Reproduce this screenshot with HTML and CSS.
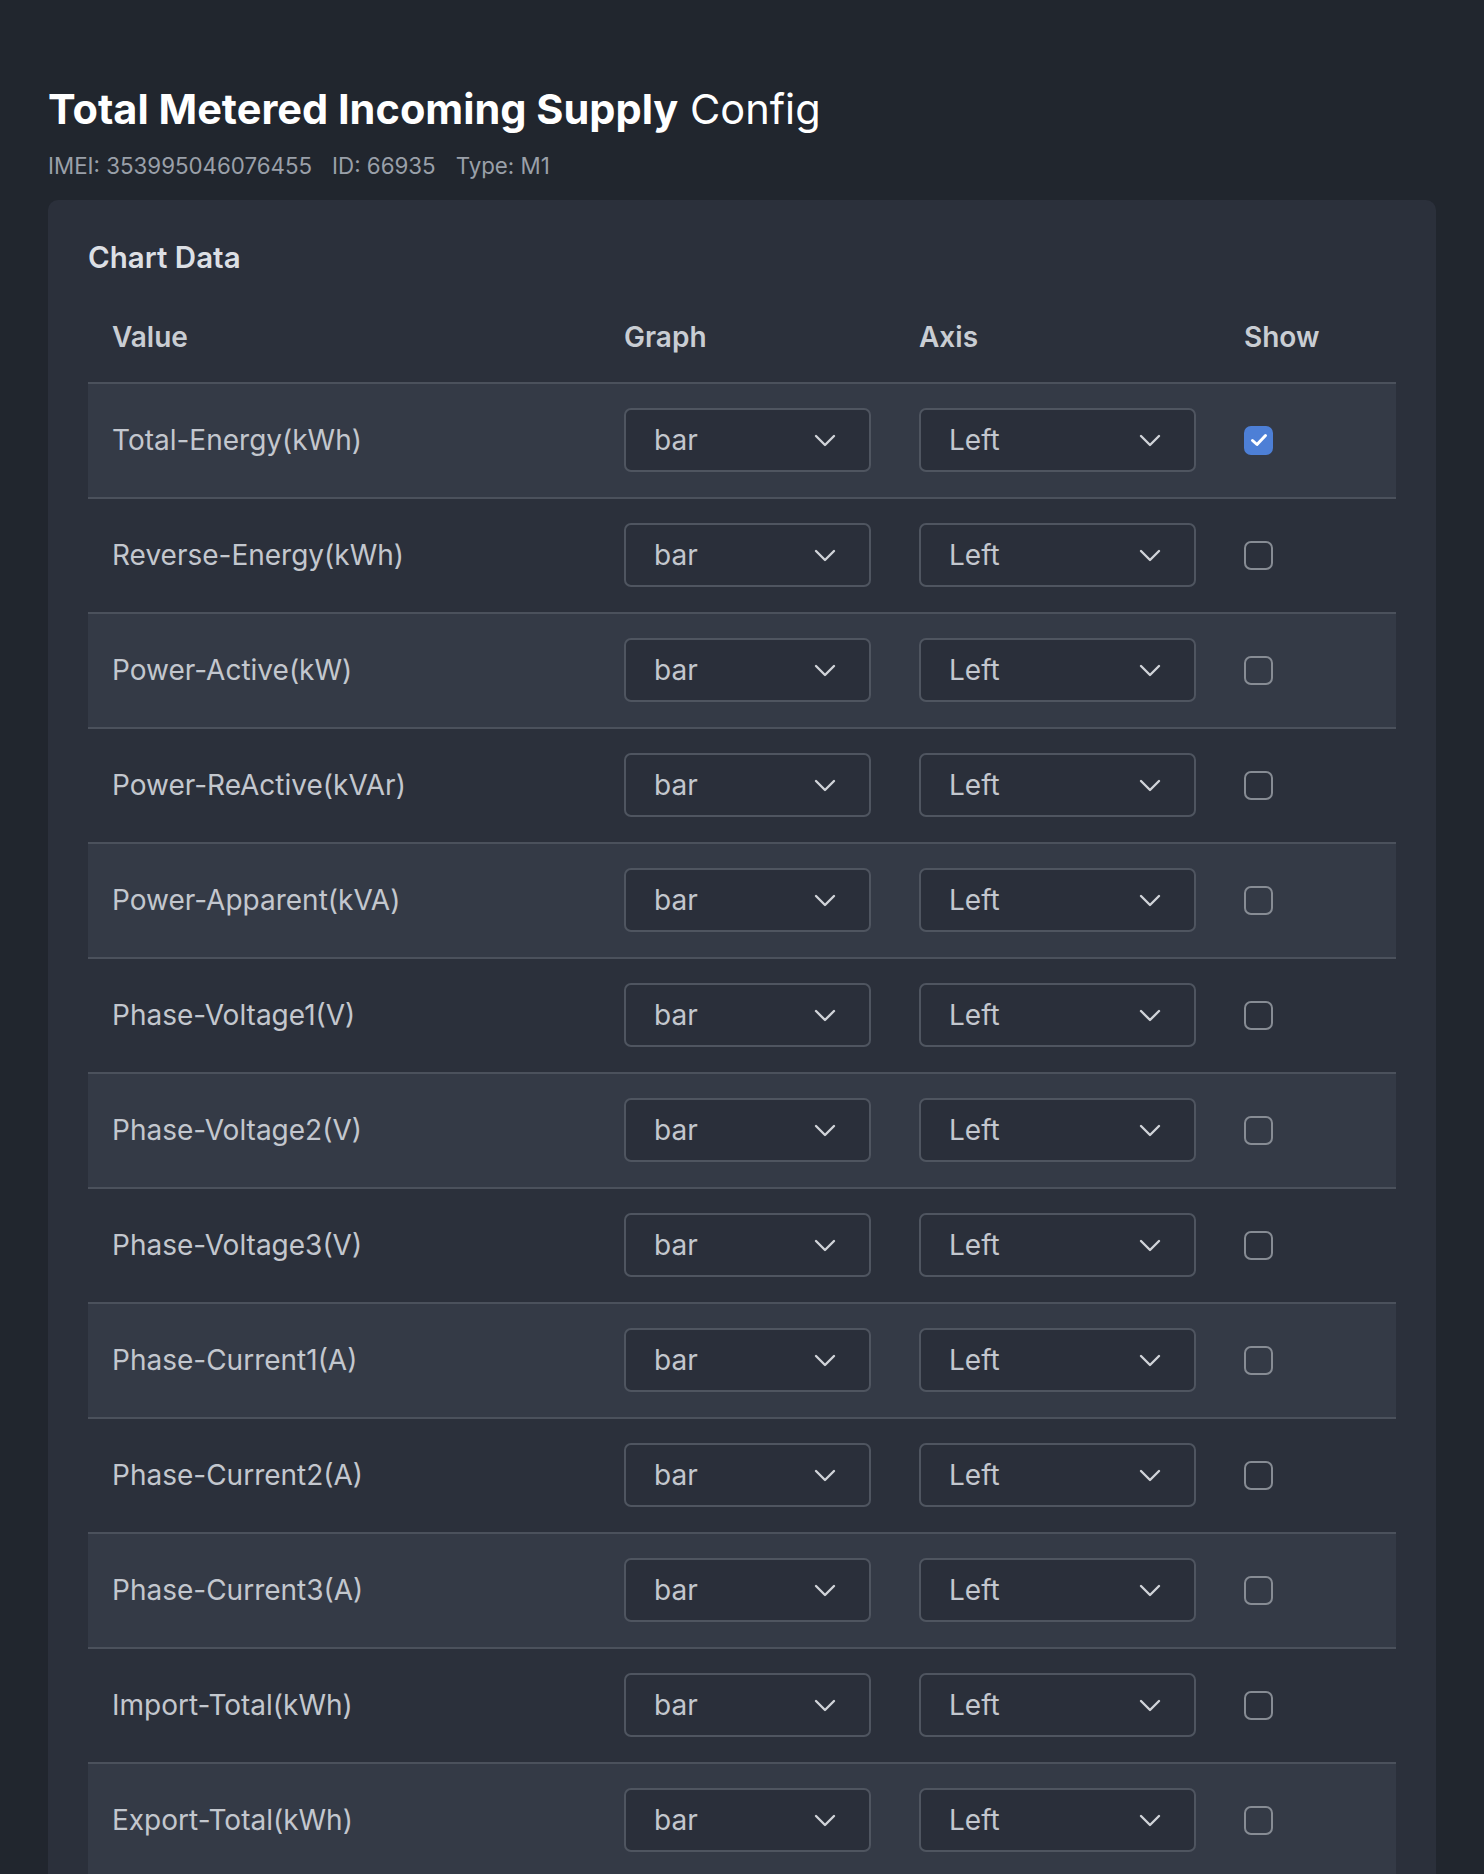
FILE: index.html
```html
<!DOCTYPE html>
<html lang="en">
<head>
    <meta charset="UTF-8">
    <meta name="viewport" content="width=device-width, initial-scale=1.0">
    <title>Total Metered Incoming Supply Config</title>
    <link rel="stylesheet" href="styles.css">
</head>
<body>
    <div class="page">
        <h1 class="title"><strong>Total Metered Incoming Supply</strong> Config</h1>
        <div class="meta">
            <span>IMEI: 353995046076455</span>
            <span>ID: 66935</span>
            <span>Type: M1</span>
        </div>

        <section class="card">
            <h2>Chart Data</h2>
            <table class="chart-table">
                <colgroup>
                    <col class="col-value">
                    <col class="col-graph">
                    <col class="col-axis">
                    <col class="col-show">
                </colgroup>
                <thead>
                    <tr>
                        <th>Value</th>
                        <th>Graph</th>
                        <th>Axis</th>
                        <th>Show</th>
                    </tr>
                </thead>
                <tbody id="rows"></tbody>
            </table>
        </section>
    </div>

    <script>
        const values = [
            'Total-Energy(kWh)',
            'Reverse-Energy(kWh)',
            'Power-Active(kW)',
            'Power-ReActive(kVAr)',
            'Power-Apparent(kVA)',
            'Phase-Voltage1(V)',
            'Phase-Voltage2(V)',
            'Phase-Voltage3(V)',
            'Phase-Current1(A)',
            'Phase-Current2(A)',
            'Phase-Current3(A)',
            'Import-Total(kWh)',
            'Export-Total(kWh)'
        ];

        const chevron = '<svg class="chevron" width="22" height="13" viewBox="0 0 22 13"><path d="M2 2l9 9 9-9" fill="none" stroke="currentColor" stroke-width="2.4" stroke-linecap="round" stroke-linejoin="round"/></svg>';
        const tick = '<svg width="18" height="14" viewBox="0 0 18 14"><path d="M2.5 7.5l4.5 4 8.5-9" fill="none" stroke="#fff" stroke-width="3" stroke-linecap="round" stroke-linejoin="round"/></svg>';

        function dropdown(label) {
            return '<div class="select"><span>' + label + '</span>' + chevron + '</div>';
        }

        const tbody = document.getElementById('rows');
        values.forEach((name, i) => {
            const row = document.createElement('tr');
            const checked = i === 0;
            row.innerHTML =
                '<td class="label">' + name + '</td>' +
                '<td>' + dropdown('bar') + '</td>' +
                '<td>' + dropdown('Left') + '</td>' +
                '<td><span class="check' + (checked ? ' checked' : '') + '">' + (checked ? tick : '') + '</span></td>';
            tbody.appendChild(row);
        });
    </script>
</body>
</html>
```

FILE: styles.css
```css
body {
    margin: 0;
    padding: 0;
    font-family: 'Inter', 'Noto Sans', sans-serif;
    background-color: #21262e;
    color: #c3c7ce;
    min-height: 100vh;
}

.page {
    padding: 85px 48px 0;
}

.title {
    margin: 0;
    font-size: 41.5px;
    line-height: 48px;
    font-weight: 400;
    color: #ffffff;
}

.title strong {
    font-weight: 700;
}

.meta {
    display: flex;
    gap: 20px;
    margin-top: 19px;
    font-size: 22.3px;
    line-height: 28px;
    color: #9aa0a9;
}

.card {
    margin-top: 20px;
    background-color: #2b303b;
    border-radius: 10px;
    padding: 40px;
}

.card h2 {
    margin: 0 0 16px;
    font-size: 29.5px;
    line-height: 34px;
    font-weight: 600;
    color: #dcdfe4;
}

.chart-table {
    width: 100%;
    border-collapse: collapse;
    table-layout: fixed;
}

.col-value { width: 512px; }
.col-graph { width: 295px; }
.col-axis { width: 325px; }
.col-show { width: 176px; }

.chart-table th {
    text-align: left;
    padding: 30px 24px 28px;
    font-size: 28px;
    line-height: 34px;
    font-weight: 600;
    color: #c9cdd3;
}

.chart-table td {
    padding: 24px 24px 25px;
    border-top: 2px solid #4b515c;
    font-size: 28px;
    line-height: 34px;
    vertical-align: middle;
}

.chart-table tbody tr:nth-child(odd) {
    background-color: #343a46;
}

.select {
    box-sizing: border-box;
    display: flex;
    align-items: center;
    justify-content: space-between;
    height: 64px;
    padding: 0 33px 0 28px;
    background-color: #2a2f3a;
    border: 2px solid #4f5560;
    border-radius: 7px;
    color: #c3c7ce;
}

.chevron {
    color: #d0d3d8;
}

.check {
    box-sizing: border-box;
    display: flex;
    align-items: center;
    justify-content: center;
    width: 29px;
    height: 29px;
    border: 2px solid #878c94;
    border-radius: 7px;
}

.check.checked {
    background-color: #4d7fd6;
    border-color: #4d7fd6;
}
```
